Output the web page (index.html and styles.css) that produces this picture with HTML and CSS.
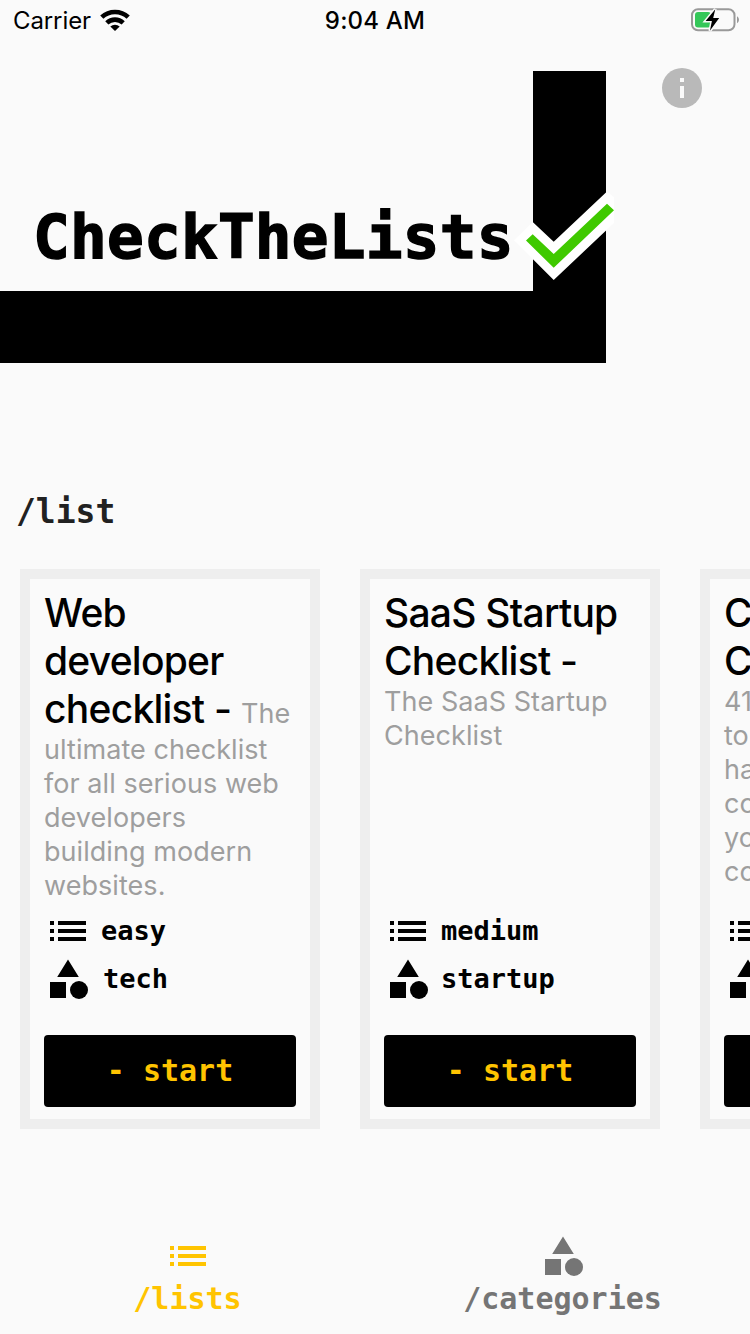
FILE: index.html
```html
<!DOCTYPE html>
<html lang="en">
<head>
<meta charset="utf-8">
<title>CheckTheLists</title>
<link rel="stylesheet" href="styles.css">
</head>
<body>
<svg class="defs" width="0" height="0">
  <symbol id="list" viewBox="0 0 24 24"><path d="M3 7h2v2H3zM3 11h2v2H3zM3 15h2v2H3zM7 7h14v2H7zM7 11h14v2H7zM7 15h14v2H7z"/></symbol>
  <symbol id="category" viewBox="0 0 24 24"><path d="M12 2.2 6.6 11h10.8zM3 13.5h8v8H3z"/><circle cx="17.5" cy="17.5" r="4.5"/></symbol>
</svg>
<div class="screen">
  <header class="status">
    <div class="carrier"><span class="carrier-name">Carrier</span>
      <svg class="wifi" width="30" height="22" viewBox="0 0 30 22"><g fill="none" stroke="#000" stroke-width="4.6"><path d="M1.8 8.2a19.2 19.2 0 0 1 26.4 0"/><path d="M6.8 13.9a12 12 0 0 1 16.4 0"/></g><path d="M10.3 17.5a7 7 0 0 1 9.4 0L15 22z"/></svg>
    </div>
    <div class="clock">9:04 AM</div>
    <svg class="battery" width="50" height="24" viewBox="690 8 50 24">
      <rect x="692" y="9.2" width="42.5" height="21" rx="6" fill="none" stroke="#999" stroke-width="2"/>
      <path d="M737 16.2c2.6 1.5 2.6 5.6 0 7z" fill="#999"/>
      <rect x="695" y="12" width="16" height="15.5" rx="3" fill="#34c759"/>
      <path d="M715.3 9.2 705.6 21h6.3l-2 9.8L719.2 18h-6z" fill="#000" stroke="#fafafa" stroke-width="3" paint-order="stroke"/>
    </svg>
  </header>

  <section class="hero">
    <div class="logo">
      <h1 class="logo-text">CheckTheLists</h1>
      <svg class="logo-check" width="101" height="90" viewBox="513 191 101 90">
        <path fill="#fff" d="M514 240.3 532.7 222l21 19.7L607 191.5l7 5.5v26l-60.3 57z"/>
        <path fill="#3fc900" d="M526 240.5l6.7-6.2 21 19.7L607 203.7l7 6.6-60.3 57.5z"/>
      </svg>
    </div>
    <svg class="info" width="48" height="48" viewBox="0 0 24 24"><circle cx="12" cy="12" r="10" fill="#b9b9b9"/><path fill="#fafafa" d="M11 7h2v2h-2zM11 11h2v6h-2z"/></svg>
  </section>

  <h2 class="section-title">/list</h2>

  <main class="cards">
    <article class="card">
      <p class="copy"><span class="name">Web<br>developer<br>checklist - </span>The<br>ultimate checklist<br>for all serious web<br>developers<br>building modern<br>websites.</p>
      <div class="meta"><svg class="icon"><use href="#list"/></svg><span>easy</span></div>
      <div class="meta"><svg class="icon"><use href="#category"/></svg><span class="tech">tech</span></div>
      <button class="start">- start</button>
    </article>
    <article class="card">
      <p class="copy"><span class="name">SaaS Startup<br>Checklist -</span><br>The SaaS Startup<br>Checklist</p>
      <div class="meta"><svg class="icon"><use href="#list"/></svg><span>medium</span></div>
      <div class="meta"><svg class="icon"><use href="#category"/></svg><span>startup</span></div>
      <button class="start">- start</button>
    </article>
    <article class="card">
      <p class="copy"><span class="name">C<br>C</span><br>41<br>to<br>ha<br>co<br>yo<br>co</p>
      <div class="meta"><svg class="icon"><use href="#list"/></svg></div>
      <div class="meta"><svg class="icon"><use href="#category"/></svg></div>
      <button class="start"></button>
    </article>
  </main>

  <nav class="tabs">
    <a class="tab active"><svg class="icon"><use href="#list"/></svg><span>/lists</span></a>
    <a class="tab"><svg class="icon"><use href="#category"/></svg><span>/categories</span></a>
  </nav>
</div>
</body>
</html>
```
FILE: styles.css
```css
* { box-sizing: border-box; }
body { margin: 0; background: #fafafa; color: #000; font-family: Inter, "Liberation Sans", sans-serif; }
h1, h2, p { margin: 0; }
.defs { display: block; position: absolute; }
.icon { display: block; width: 48px; height: 48px; fill: currentColor; flex: none; }

.screen { width: 750px; height: 1334px; overflow: hidden; display: flex; flex-direction: column; }

.status { height: 40px; flex: none; display: grid; grid-template-columns: 1fr auto 1fr; padding: 0 10px; align-items: center; font-size: 24px; line-height: 40px; }
.carrier { display: flex; align-items: center; gap: 9px; padding-left: 3px; }
.carrier-name { letter-spacing: -0.1px; padding-top: 2px; line-height: 38px; }
.clock { font-weight: 500; letter-spacing: 0.2px; padding-top: 2px; line-height: 38px; }
.battery { justify-self: end; }

.hero { height: 440px; flex: none; display: flex; justify-content: space-between; align-items: flex-start; padding: 24px 44px 0 0; }
.logo { position: relative; width: 606px; height: 292px; margin-top: 6.5px; border-right: 73px solid #000; border-bottom: 72px solid #000; }
.logo-text { padding: 131px 0 0 33px; font: bold 61px/70px "DejaVu Sans Mono", monospace; letter-spacing: 0.25px; -webkit-text-stroke: 1.5px #000; white-space: nowrap; }
.logo-check { position: absolute; left: 513px; top: 120.5px; }

.section-title { height: 89px; flex: none; padding: 10px 0 0 16px; font: bold 33px/44px "DejaVu Sans Mono", monospace; color: #212121; }

.cards { display: flex; gap: 40px; padding-left: 20px; height: 560px; flex: none; }
.card { width: 300px; height: 560px; flex: none; border: 10px solid #eee; padding: 10px 14px 0; display: flex; flex-direction: column; }
.copy { height: 318px; flex: none; font-size: 27px; line-height: 34px; color: #9e9e9e; letter-spacing: 0.05px; white-space: nowrap; }
.name { font-size: 39px; font-weight: 500; line-height: 48px; color: #000; letter-spacing: -0.75px; }
.meta { height: 48px; display: flex; align-items: center; gap: 9px; font: bold 27px/48px "DejaVu Sans Mono", monospace; }
.start { display: block; width: 252px; height: 72px; flex: none; margin-top: 32px; border: 0; border-radius: 4px; background: #000; color: #ffc400; font: bold 30px/72px "DejaVu Sans Mono", monospace; padding: 0; }
.tech { padding-left: 2px; }

.tabs { flex: 1; display: grid; grid-template-columns: 1fr 1fr; padding-top: 103px; }
.tab { display: flex; flex-direction: column; align-items: center; color: #757575; font: bold 30px/38px "DejaVu Sans Mono", monospace; }
.active { color: #ffc400; }
```
